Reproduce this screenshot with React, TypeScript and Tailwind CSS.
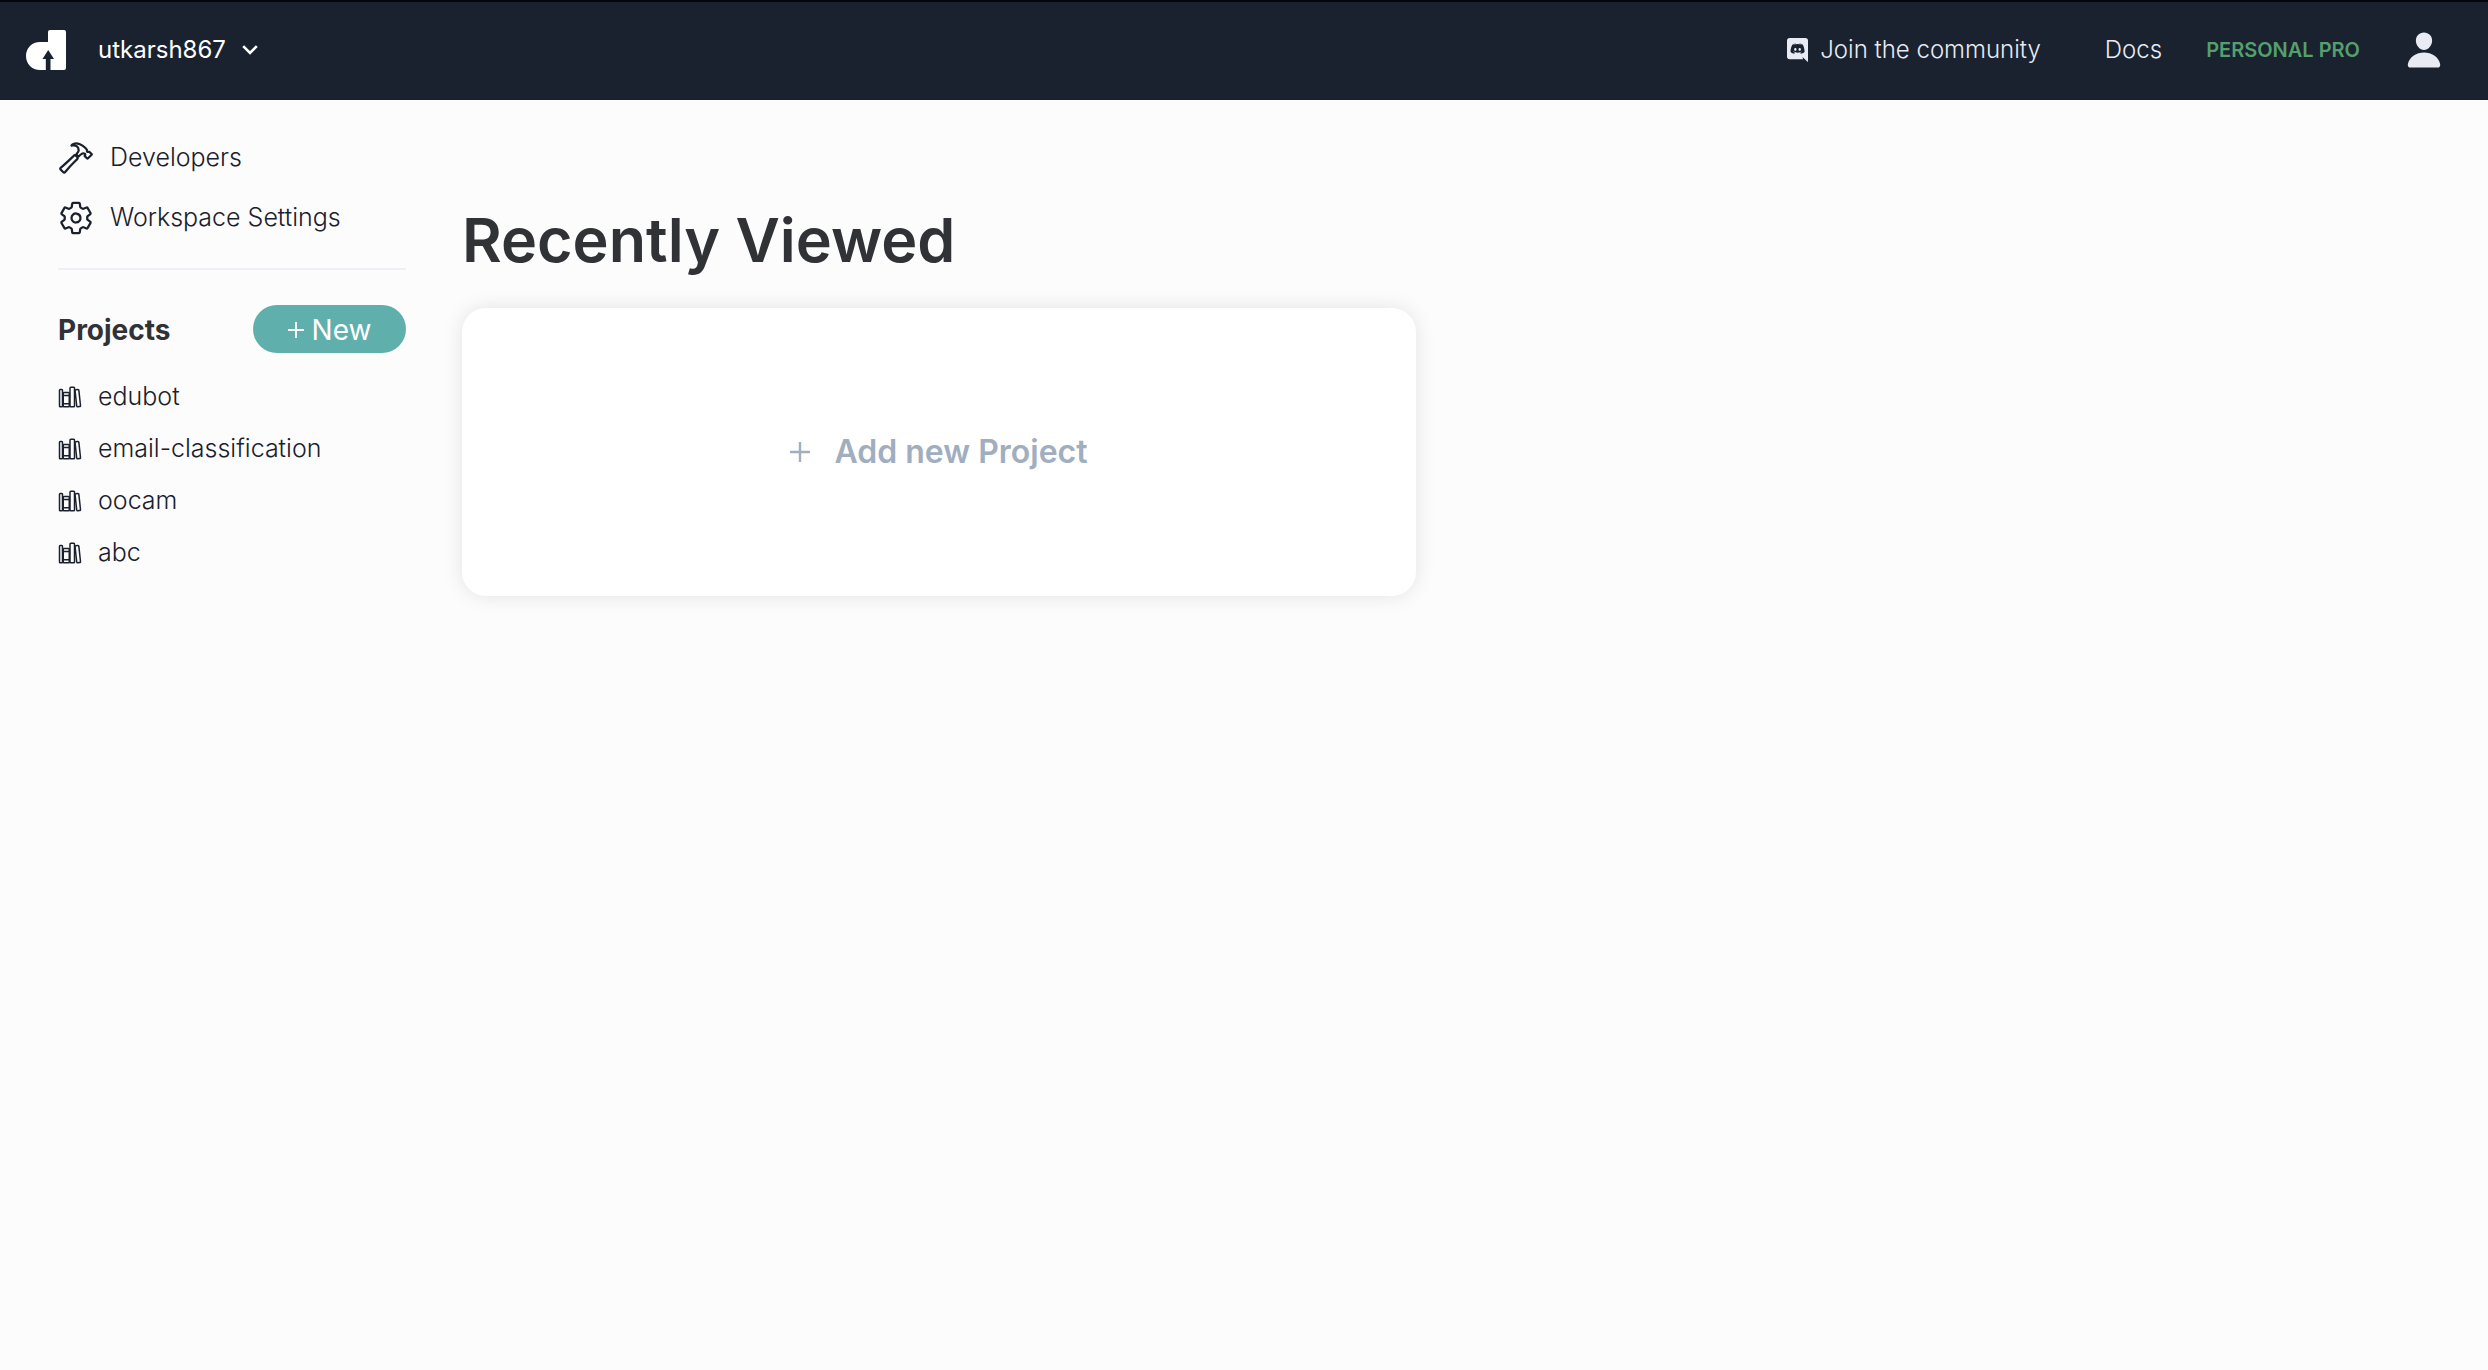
import type { ReactNode } from "react";
import {
  IoHammerOutline,
  IoLibraryOutline,
  IoPerson,
  IoSettingsOutline,
} from "react-icons/io5";

const projects = ["edubot", "email-classification", "oocam", "abc"];

function Logo() {
  return (
    <svg viewBox="0 0 40 40" className="size-10" aria-hidden="true">
      <path
        fill="#fff"
        d="M24 0h14a2 2 0 0 1 2 2v36a2 2 0 0 1-2 2H24.500V29H28L22.200 20 16.500 29h3.300v11H14C6 40 0 34 0 26S6 12 14 12h8V2a2 2 0 0 1 2-2z"
      />
    </svg>
  );
}

function Discord() {
  return (
    <svg viewBox="0 0 448 512" className="h-6 w-[21px]" fill="currentColor" aria-hidden="true">
      <path d="M297.216 243.2c0 15.616-11.52 28.416-26.112 28.416-14.336 0-26.112-12.8-26.112-28.416s11.52-28.416 26.112-28.416c14.592 0 26.112 12.8 26.112 28.416zm-119.552-28.416c-14.592 0-26.112 12.8-26.112 28.416s11.776 28.416 26.112 28.416c14.592 0 26.112-12.8 26.112-28.416.256-15.616-11.52-28.416-26.112-28.416zM448 52.736V512c-64.494-56.994-43.868-38.128-118.784-107.776l13.568 47.36H52.48C23.552 451.584 0 428.032 0 398.848V52.736C0 23.552 23.552 0 52.48 0h343.04C424.448 0 448 23.552 448 52.736zm-72.96 242.688c0-82.432-36.864-149.248-36.864-149.248-36.864-27.648-71.936-26.88-71.936-26.88l-3.584 4.096c43.52 13.312 63.744 32.512 63.744 32.512-60.811-33.329-132.244-33.335-191.232-7.424-9.472 4.352-15.104 7.424-15.104 7.424s21.248-20.224 67.328-33.536l-2.56-3.072s-35.072-.768-71.936 26.88c0 0-36.864 66.816-36.864 149.248 0 0 21.504 37.12 78.08 38.912 0 0 9.472-11.52 17.152-21.248-32.512-9.728-44.8-30.208-44.8-30.208 3.766 2.636 9.976 6.053 10.496 6.4 43.21 24.198 104.588 32.126 159.744 8.96 8.96-3.328 18.944-8.192 29.44-15.104 0 0-12.8 20.992-46.336 30.464 7.68 9.728 16.896 20.736 16.896 20.736 56.576-1.792 78.336-38.912 78.336-38.912z" />
    </svg>
  );
}

function Plus({ className }: { className: string }) {
  return (
    <svg viewBox="0 0 20 20" className={className} fill="none" stroke="currentColor" strokeWidth="2.4" aria-hidden="true">
      <path d="M10 0v20M0 10h20" />
    </svg>
  );
}

function Header() {
  return (
    <header className="flex h-[100px] items-center justify-between border-t-2 border-[#04060f] bg-[#1a2230] pr-11 pb-0.5 pl-[26px] text-[#e8ebf3]">
      <div className="flex items-center gap-8">
        <a href="#home" aria-label="Home">
          <Logo />
        </a>
        <button type="button" className="flex items-center gap-4 text-2xl text-white">
          utkarsh867
          <svg viewBox="0 0 16 10" className="h-[10px] w-4" fill="none" stroke="currentColor" strokeWidth="2.6" aria-hidden="true">
            <path d="M1.200 1.200 8 8l6.800-6.800" />
          </svg>
        </button>
      </div>
      <nav className="flex items-center text-2xl font-light">
        <a href="#community" className="flex items-center gap-3">
          <Discord />
          Join the community
        </a>
        <a href="#docs" className="ml-16">
          Docs
        </a>
        <span className="ml-11 text-xl font-semibold text-[#559f6d]">PERSONAL PRO</span>
        <button type="button" aria-label="Account" className="ml-11">
          <IoPerson className="size-10" aria-hidden="true" />
        </button>
      </nav>
    </header>
  );
}

function MenuLink({ icon, children }: { icon: ReactNode; children: ReactNode }) {
  return (
    <a href="#menu" className="flex h-[60px] items-center gap-4">
      {icon}
      {children}
    </a>
  );
}

function Sidebar() {
  return (
    <aside className="w-[348px] shrink-0 pt-7 text-[25px] font-light text-[#1a202c]">
      <nav>
        <MenuLink icon={<IoHammerOutline className="size-9" aria-hidden="true" />}>Developers</MenuLink>
        <MenuLink icon={<IoSettingsOutline className="size-9" aria-hidden="true" />}>Workspace Settings</MenuLink>
      </nav>
      <hr className="mt-5 border-t-2 border-[#edf0f5]" />
      <div className="mt-[35px] flex items-center justify-between">
        <h2 className="pt-0.5 text-[28px] font-bold text-[#303236]">Projects</h2>
        <button
          type="button"
          className="flex h-12 w-[153px] items-center justify-center gap-2 rounded-full bg-[#5fb0ac] pt-0.5 text-[28px] font-normal text-white"
        >
          <Plus className="size-4" />
          New
        </button>
      </div>
      <ul className="mt-[18px]">
        {projects.map((name) => (
          <li key={name}>
            <a href={"#" + name} className="flex h-[52px] items-center gap-4">
              <IoLibraryOutline className="size-6" aria-hidden="true" />
              {name}
            </a>
          </li>
        ))}
      </ul>
    </aside>
  );
}

export default function App() {
  return (
    <div className="min-h-screen bg-[#fcfcfc] font-['Inter',sans-serif]">
      <Header />
      <div className="flex gap-14 px-[58px]">
        <Sidebar />
        <main className="min-w-0 flex-1 pt-[98px]">
          <h1 className="text-[61px] leading-[84px] font-semibold text-[#303236]">Recently Viewed</h1>
          <div className="mt-[26px] grid grid-cols-2 gap-[60px]">
            <button
              type="button"
              className="flex h-[288px] items-center justify-center gap-6 rounded-3xl bg-white text-[32px] font-semibold text-[#a0aec0] shadow-[0_0_20px_rgba(0,0,0,0.1)]"
            >
              <Plus className="size-5" />
              Add new Project
            </button>
          </div>
        </main>
      </div>
    </div>
  );
}
